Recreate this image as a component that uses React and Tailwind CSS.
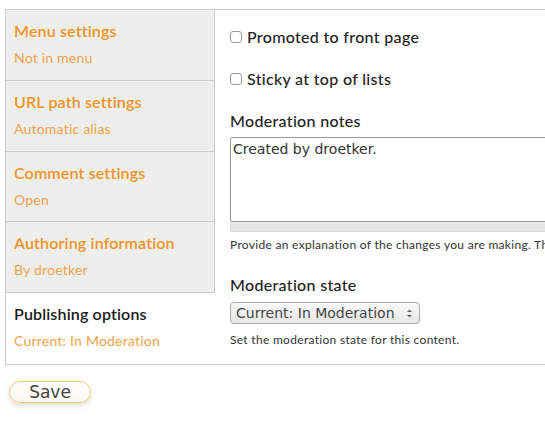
import React from 'react';

const tabs = [
  { title: 'Menu settings', summary: 'Not in menu' },
  { title: 'URL path settings', summary: 'Automatic alias' },
  { title: 'Comment settings', summary: 'Open' },
  { title: 'Authoring information', summary: 'By droetker' },
  { title: 'Publishing options', summary: 'Current: In Moderation', selected: true },
];

const font = { fontFamily: 'Lato, "Open Sans", sans-serif' };

export default function App() {
  return (
    <div className="w-[545px] h-[421px] bg-white overflow-hidden text-[#222]" style={font}>
      <div className="mt-[9px] ml-[5px] flex border-t border-b border-l border-[#ccc] h-[356px]">
        <ul className="w-[209px] shrink-0 flex flex-col">
          {tabs.map((t, i) => (
            <li
              key={t.title}
              className={`h-[71px] px-[8px] pt-[11px] ${t.selected ? 'bg-white' : 'bg-[#eeeeee] border-r border-[#ccc]'} ${i < tabs.length - 1 ? 'border-b border-[#ccc]' : ''}`}
            >
              <div className={`text-[16px] leading-[20px] font-semibold tracking-[0.01em] ${t.selected ? 'text-[#1a1a1a]' : 'text-[#f39325]'}`}>{t.title}</div>
              <div className="mt-[8px] text-[14px] leading-[18px] tracking-[0.015em] text-[#f2a24a]">{t.summary}</div>
            </li>
          ))}
        </ul>
        <div className="flex-1 pl-[15px] pt-[18px] overflow-hidden">
          <label className="flex items-center gap-[5px] text-[16px] leading-[18px] font-medium tracking-[0.02em]">
            <span className="w-[12px] h-[12px] rounded-[3px] border border-[#999] bg-white shrink-0" />
            Promoted to front page
          </label>
          <label className="mt-[24px] flex items-center gap-[5px] text-[16px] leading-[18px] font-medium tracking-[0.02em]">
            <span className="w-[12px] h-[12px] rounded-[3px] border border-[#999] bg-white shrink-0" />
            Sticky at top of lists
          </label>
          <div className="mt-[24px] text-[16px] leading-[18px] font-medium tracking-[0.02em]">Moderation notes</div>
          <div className="mt-[7px] w-[330px]">
            <div className="h-[85px] border border-[#999] rounded-[2px] px-[2px] pt-[1px] text-[14px] text-[#333]" style={{ fontFamily: '"DejaVu Sans", sans-serif' }}>
              Created by droetker.
            </div>
            <div className="h-[10px] bg-[#e6e6e6] border-x border-b border-[#ddd]" />
          </div>
          <div className="mt-[6px] text-[12px] leading-[14px] tracking-[0.025em] text-[#333] whitespace-nowrap">
            Provide an explanation of the changes you are making. This will help other authors understand your motivations.
          </div>
          <div className="mt-[24px] text-[16px] leading-[18px] font-medium tracking-[0.02em]">Moderation state</div>
          <div className="mt-[8px] w-[190px] h-[22px] rounded-[4px] border border-[#aaa] bg-gradient-to-b from-[#fafafa] to-[#e6e6e6] flex items-center justify-between pl-[5px] pr-[6px] text-[14px] text-[#444]" style={{ fontFamily: '"DejaVu Sans", sans-serif' }}>
            <span>Current: In Moderation</span>
            <svg width="7" height="11" viewBox="0 0 7 11">
              <path d="M1 4 L3.5 1.5 L6 4 Z" fill="#666" />
              <path d="M1 7 L3.5 9.5 L6 7 Z" fill="#666" />
            </svg>
          </div>
          <div className="mt-[9px] text-[12px] leading-[14px] tracking-[0.025em] text-[#333]">Set the moderation state for this content.</div>
        </div>
      </div>
      <button
        className="mt-[16px] ml-[9px] w-[82px] h-[22px] rounded-full border border-[#e9c97a] bg-gradient-to-b from-white to-[#fbf7ee] shadow-[0_3px_5px_rgba(0,0,0,0.12)] text-[17px] leading-[20px] text-[#444]"
        style={{ fontFamily: '"DejaVu Sans", sans-serif' }}
      >
        Save
      </button>
    </div>
  );
}
